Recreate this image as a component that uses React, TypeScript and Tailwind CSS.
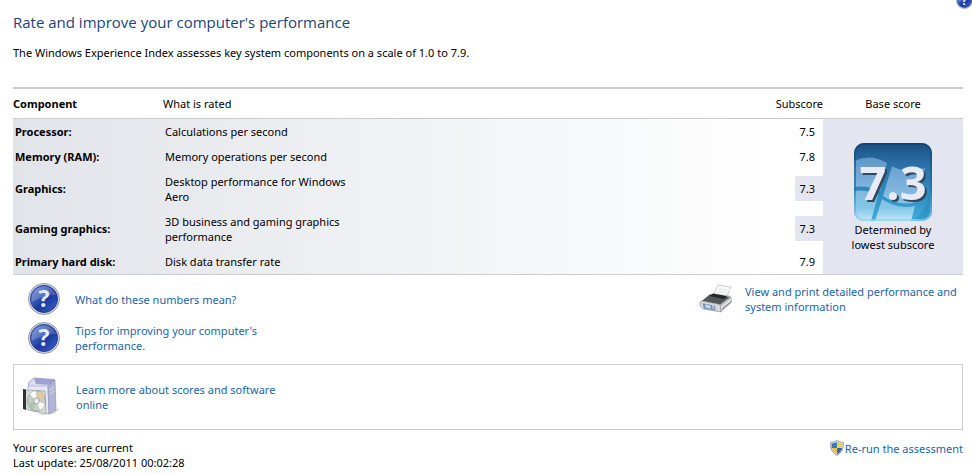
import { useId } from 'react';

// --- DATA TYPES ---
interface Rating {
    component: string;
    description: string;
    subscore: string;
    lowest?: boolean;
}

const ratings: Rating[] = [
    { component: 'Processor:', description: 'Calculations per second', subscore: '7.5' },
    { component: 'Memory (RAM):', description: 'Memory operations per second', subscore: '7.8' },
    { component: 'Graphics:', description: 'Desktop performance for Windows Aero', subscore: '7.3', lowest: true },
    { component: 'Gaming graphics:', description: '3D business and gaming graphics performance', subscore: '7.3', lowest: true },
    { component: 'Primary hard disk:', description: 'Disk data transfer rate', subscore: '7.9' },
];

// --- ICONS ---
const HelpIcon = ({ className }: { className: string }) => {
    const id = useId();
    return (
        <svg viewBox="0 0 32 32" className={className} aria-hidden="true">
            <defs>
                <linearGradient id={id} x1="0" y1="0" x2="1" y2="1">
                    <stop offset="0" stopColor="#6f8cd6" />
                    <stop offset="0.45" stopColor="#2c4cae" />
                    <stop offset="0.55" stopColor="#1b389c" />
                    <stop offset="1" stopColor="#3868d2" />
                </linearGradient>
            </defs>
            <circle cx="16" cy="16" r="15.5" fill="#d9dce6" stroke="#7c8399" strokeWidth="0.8" />
            <circle cx="16" cy="16" r="13.6" fill={`url(#${id})`} stroke="#1c2f7a" strokeWidth="0.8" />
            <path d="M3.5 15.5A12.6 12.6 0 0 1 28 12Q18 11 3.5 19Z" fill="#fff" opacity="0.2" />
            <text x="16" y="24" textAnchor="middle" fontSize="23" fontWeight="700" fill="#e6ebfa" className="font-['Open_Sans']">?</text>
        </svg>
    );
};

const PrinterIcon = () => (
    <svg viewBox="0 0 34 30" className="h-[30px] w-[34px] shrink-0" aria-hidden="true">
        <path d="M14 12L19 1L32 3L26 16Z" fill="#fafafb" stroke="#b4b7bb" strokeWidth="0.7" />
        <path d="M20 4.5L29 6M19 7L28 8.5M17.5 9.5L26.5 11" stroke="#dcdfe2" strokeWidth="0.8" />
        <path d="M1 18L11 10L16 10.5L15 13L26 15L27.5 11L32 12L32 16L22 28L4 24.5L1 22Z" fill="#b9bcc1" />
        <path d="M3 17L11 10.5L31 13L21 20.5Z" fill="#55565a" />
        <path d="M10.5 12L14 9.5L28 12L25 15Z" fill="#242427" />
        <path d="M21 22L32 13.5L32.5 18L22 28Z" fill="#dcdee0" stroke="#8b8e93" strokeWidth="0.6" />
        <path d="M23 25L32 18" stroke="#6b6e73" />
        <path d="M1 18L3 17L21 20.5L22 28L4 25L1 22Z" fill="#d6dade" stroke="#888c92" strokeWidth="0.6" />
        <path d="M3.5 19.2L16 21.7L16.5 26.5L5 24.5Z" fill="#6f8fb1" />
        <path d="M6 20.6L11.5 21.7L11.8 24.4L6.5 23.4Z" fill="#c3def3" />
        <path d="M13 22L15 22.4M13.3 24L15.3 24.4" stroke="#e8f2fa" />
    </svg>
);

const SoftwareIcon = () => (
    <svg viewBox="0 0 38 40" className="h-10 w-[38px] shrink-0" aria-hidden="true">
        <path d="M30 34L37 31L31 37L12 38Z" fill="#d8d8dc" />
        <path d="M6 5L11 1L31 2.5L28 9L5 11Z" fill="#dcdcf1" stroke="#9b9bc0" strokeWidth="0.8" />
        <path d="M11 1L13 7L29 8L32 2.5Z" fill="#9da0d2" />
        <path d="M5 9L25 9L26 37L6 33Z" fill="#e6e6f2" stroke="#a5a5c4" strokeWidth="0.6" />
        <path d="M25 9L32 3L33 33L26 37Z" fill="#b4b4d4" stroke="#8b8bb5" strokeWidth="0.6" />
        <path d="M27 13L31 10M27 17L31 14" stroke="#dedef0" />
        <path d="M2 13L22 14L23 37L2 32Z" fill="#d3dad5" stroke="#979e9b" strokeWidth="0.7" />
        <path d="M0 12L3 12.5L3 33L0 32Z" fill="#303236" />
        <ellipse cx="13.5" cy="24" rx="9" ry="10" fill="#c6ccc8" stroke="#858d8b" strokeWidth="0.6" />
        <path d="M13.5 24L7 17A9 10 0 0 1 13 14Z" fill="#fff" />
        <path d="M13.5 24L16 14.4A9 10 0 0 1 21.5 19Z" fill="#ecc998" />
        <path d="M13.5 24L22 27A9 10 0 0 1 17 33Z" fill="#f8faf8" />
        <path d="M13.5 24L10 33A9 10 0 0 1 5 27Z" fill="#a6c7a9" />
        <ellipse cx="13.5" cy="24" rx="2.7" ry="3" fill="#f3f3f3" stroke="#8b9290" strokeWidth="0.8" />
    </svg>
);

const ShieldIcon = () => (
    <svg viewBox="0 0 14 16" className="h-4 w-3.5 shrink-0" aria-hidden="true">
        <path d="M7 .5Q10 2.3 13.3 2.5Q14.3 11.5 7 15.5Q-.3 11.5 .7 2.5Q4 2.3 7 .5Z" fill="#dfe4e8" stroke="#7d8d9c" strokeWidth="0.8" />
        <path d="M6.9 2V8H1.8Q1.5 6 1.8 3.6Q4.5 3.4 6.9 2Z" fill="#3478bd" />
        <path d="M7.1 2V8H12.2Q12.5 6 12.2 3.6Q9.5 3.4 7.1 2Z" fill="#f5cf45" />
        <path d="M6.9 8V14.2Q2.9 12 1.8 8Z" fill="#f0c238" />
        <path d="M7.1 8V14.2Q11.1 12 12.2 8Z" fill="#2c65aa" />
    </svg>
);

const ScoreBadge = ({ score }: { score: string }) => (
    <svg viewBox="0 0 78 78" className="mx-auto block size-[78px]" role="img" aria-label={`Base score ${score}`}>
        <defs>
            <linearGradient id="badge-sky" x1="0" y1="0" x2="0" y2="1">
                <stop offset="0" stopColor="#1a4f82" />
                <stop offset="0.25" stopColor="#2a6ea6" />
                <stop offset="0.65" stopColor="#2f8cc2" />
                <stop offset="1" stopColor="#43add8" />
            </linearGradient>
            <linearGradient id="badge-pane" gradientUnits="userSpaceOnUse" x1="0" y1="14" x2="0" y2="78">
                <stop offset="0" stopColor="#5f97c8" />
                <stop offset="0.5" stopColor="#80b5de" />
                <stop offset="0.8" stopColor="#86c8e8" />
                <stop offset="1" stopColor="#bdeaf8" />
            </linearGradient>
            <linearGradient id="badge-edge" x1="0" y1="0" x2="0" y2="1">
                <stop offset="0" stopColor="#123f6b" />
                <stop offset="0.6" stopColor="#2473a8" />
                <stop offset="1" stopColor="#8fd3ee" />
            </linearGradient>
            <clipPath id="badge-clip">
                <rect width="78" height="78" rx="10" />
            </clipPath>
        </defs>
        <g clipPath="url(#badge-clip)">
            <rect width="78" height="78" fill="url(#badge-sky)" />
            <path d="M0 18Q17 10 33 20L26 48Q13 42 0 44Z" fill="url(#badge-pane)" />
            <path d="M38 23Q53 32 71 25L62 59Q45 64 29 53Z" fill="url(#badge-pane)" />
            <path d="M0 48Q13 46 24 52L17 78H0Z" fill="url(#badge-pane)" />
            <path d="M28 56Q44 67 61 63L57 78H21Z" fill="url(#badge-pane)" />
            <path d="M60 78Q78 62 78 25V78Z" fill="#1f86bd" opacity="0.45" />
        </g>
        <rect x="1" y="1" width="76" height="76" rx="9" fill="none" stroke="url(#badge-edge)" strokeWidth="2" opacity="0.7" />
        <text x="39" y="57" fontSize="47" fontWeight="700" textAnchor="middle" fill="#e8ebf5" className="font-['Open_Sans'] drop-shadow-[2px_2px_0px_#32485c]">{score}</text>
    </svg>
);

const linkClass = 'text-[#1a64a6] hover:underline';

// --- MAIN PAGE COMPONENT ---
export default function PerformanceIndexPage() {
    return (
        <main className="relative overflow-hidden bg-white pr-[9px] pl-[13px] pt-3 pb-1 font-['Noto_Sans',sans-serif] text-[11px] leading-[15px] text-black">
            <button type="button" aria-label="Help" className="absolute -top-2 -right-px">
                <HelpIcon className="size-[17px]" />
            </button>

            <h1 className="font-['Open_Sans',sans-serif] text-[15px] leading-5 text-[#1b4476]">Rate and improve your computer's performance</h1>
            <p className="mt-[13px]">The Windows Experience Index assesses key system components on a scale of 1.0 to 7.9.</p>

            <table className="mt-[27px] w-full border-collapse border-t-2 border-b border-t-[#cccccc] border-b-[#cccccc]">
                <thead>
                    <tr className="h-[30px] border-b border-[#cccccc]">
                        <th scope="col" className="w-[150px] text-left font-bold">Component</th>
                        <th scope="col" className="text-left font-normal">What is rated</th>
                        <th scope="col" className="w-[60px] text-right font-normal">Subscore</th>
                        <th scope="col" className="w-[140px] text-center font-normal">Base score</th>
                    </tr>
                </thead>
                <tbody className="bg-linear-to-r from-[#e1e4e9] to-white to-80%">
                    {ratings.map((rating, index) => (
                        <tr key={rating.component} className="last:h-[26px]">
                            <th scope="row" className="py-[5px] pl-0.5 text-left font-bold whitespace-nowrap">{rating.component}</th>
                            <td className="py-[5px] pl-0.5">
                                <div className="max-w-[200px]">{rating.description}</div>
                            </td>
                            <td>
                                <div className={`ml-auto w-7 py-[5px] pr-2 text-right ${rating.lowest ? 'bg-[#e3e5f1]' : ''}`}>{rating.subscore}</div>
                            </td>
                            {index === 0 && (
                                <td rowSpan={ratings.length} className="bg-[#e3e5f1] pt-0.5 text-center align-middle">
                                    <ScoreBadge score="7.3" />
                                    <div className="mt-px">Determined by<br />lowest subscore</div>
                                </td>
                            )}
                        </tr>
                    ))}
                </tbody>
            </table>

            <div className="flex items-start justify-between pt-2 pl-[15px]">
                <div className="flex flex-col gap-[7px]">
                    <div className="flex items-center gap-[15px]">
                        <HelpIcon className="size-8 shrink-0" />
                        <a href="#numbers" className={linkClass}>What do these numbers mean?</a>
                    </div>
                    <div className="flex items-center gap-[15px]">
                        <HelpIcon className="size-8 shrink-0" />
                        <a href="#tips" className={`w-[210px] ${linkClass}`}>Tips for improving your computer's performance.</a>
                    </div>
                </div>
                <div className="flex h-8 items-center gap-3">
                    <PrinterIcon />
                    <a href="#details" className={`w-[218px] ${linkClass}`}>View and print detailed performance and system information</a>
                </div>
            </div>

            <section className="mt-2.5 flex h-[66px] items-center gap-[15px] border border-[#cccccc] pl-[9px]">
                <SoftwareIcon />
                <a href="#learn" className={`w-[215px] ${linkClass}`}>Learn more about scores and software online</a>
            </section>

            <footer className="mt-2.5 flex items-start justify-between">
                <p>Your scores are current<br />Last update: 25/08/2011 00:02:28</p>
                <button type="button" className={`flex items-center gap-px ${linkClass}`}>
                    <ShieldIcon />
                    Re-run the assessment
                </button>
            </footer>
        </main>
    );
}
